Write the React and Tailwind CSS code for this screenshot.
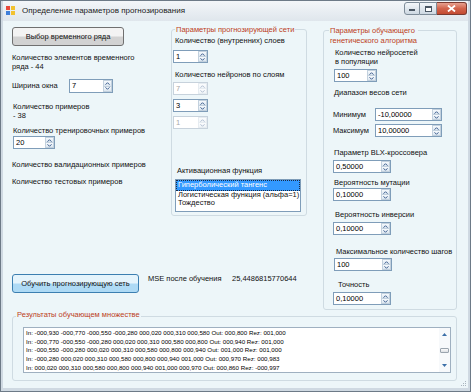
import React from "react";

const FONT = { fontFamily: '"Liberation Sans", Arial, sans-serif' };

function Arrow({ up }) {
  return (
    <svg width="5" height="3" viewBox="0 0 5 3" className="block">
      <path d={up ? "M0.5 2.7 L2.5 0.7 L4.5 2.7" : "M0.5 0.3 L2.5 2.3 L4.5 0.3"} stroke="#3f5f8f" strokeWidth="1" fill="none" />
    </svg>
  );
}

function Spin({ value, disabled, className }) {
  return (
    <div
      className={`flex h-[13px] shrink-0 border bg-white ${
        disabled ? "border-[#c7d2dc] text-[#a8a8a8]" : "border-[#7f9db9] text-black"
      } ${className}`}
    >
      <div className="flex-1 pl-[2px] leading-[11px]">{value}</div>
      <div className={`flex w-[9px] flex-col ${disabled ? "opacity-40" : ""}`}>
        <div className="flex flex-1 items-center justify-center border border-[#c3d1de] bg-linear-to-b from-[#f7fafd] to-[#dbe6f0]">
          <Arrow up />
        </div>
        <div className="flex flex-1 items-center justify-center border border-t-0 border-[#c3d1de] bg-linear-to-b from-[#f7fafd] to-[#dbe6f0]">
          <Arrow />
        </div>
      </div>
    </div>
  );
}

function GroupTitle({ children, className }) {
  return (
    <div className={`w-fit bg-[#edf6f9] px-[1px] text-[#bc3d22] ${className}`}>{children}</div>
  );
}

const lines = [
  "In: -000,930 -000,770 -000,550 -000,280 000,020 000,310 000,580 Out: 000,800 Rez: 001,000",
  "In: -000,770 -000,550 -000,280 000,020 000,310 000,580 000,800 Out: 000,940 Rez: 001,000",
  "In: -000,550 -000,280 000,020 000,310 000,580 000,800 000,940 Out: 001,000 Rez: 001,000",
  "In: -000,280 000,020 000,310 000,580 000,800 000,940 001,000 Out: 000,970 Rez: 000,983",
  "In: 000,020 000,310 000,580 000,800 000,940 001,000 000,970 Out: 000,860 Rez: -000,997",
];

export default function App() {
  return (
    <div
      style={FONT}
      className="flex h-[392px] w-[471px] flex-col overflow-hidden border border-[#6d7a87] bg-[#cfd9e2] px-[2px] pb-[3px] text-[7.5px] leading-[9px] text-[#111]"
    >
      {/* Title bar */}
      <div className="flex h-[20px] shrink-0 items-start bg-linear-to-b from-[#f3f6f9] to-[#dfe6ec]">
        <svg width="9" height="9" viewBox="0 0 9 9" className="ml-[3px] mt-[5px]">
          <rect x="0" y="0" width="4" height="4" fill="#e8483a" />
          <rect x="5" y="0" width="4" height="4" fill="#f2c230" />
          <rect x="0" y="5" width="4" height="4" fill="#3f7fd9" />
          <rect x="5" y="5" width="4" height="4" fill="#f2c230" />
        </svg>
        <div className="ml-[7px] mt-[5px] text-[8px] leading-[10px] text-[#1b1b1b]">
          Определение параметров прогнозирования
        </div>
        <div className="ml-auto mr-[1px] mt-[1px] flex">
          <div className="flex h-[13px] w-[16px] items-end justify-center rounded-l-[3px] border border-[#7e8c99] bg-linear-to-b from-[#f4f7fa] to-[#cdd8e2] pb-[3px]">
            <div className="h-[2px] w-[6px] border border-[#4a5663] bg-white" />
          </div>
          <div className="flex h-[13px] w-[17px] items-center justify-center border border-l-0 border-[#7e8c99] bg-linear-to-b from-[#f4f7fa] to-[#cdd8e2]">
            <div className="h-[6px] w-[7px] border border-[#4a5663] border-t-2 bg-white" />
          </div>
          <div className="flex h-[13px] w-[30px] items-center justify-center rounded-r-[3px] border border-l-0 border-[#7a3a30] bg-linear-to-b from-[#e6a08f] via-[#d2644c] to-[#c34a31]">
            <svg width="9" height="7" viewBox="0 0 9 7">
              <path d="M1 0.5 L8 6.5 M8 0.5 L1 6.5" stroke="#fff" strokeWidth="1.8" />
            </svg>
          </div>
        </div>
      </div>

      {/* Client area */}
      <div className="relative flex flex-1 flex-col bg-[#edf6f9] pl-[9px] pt-[6px]">
        <div className="flex items-start">
          {/* Left + middle */}
          <div className="flex w-[308px] flex-col">
            <div className="flex items-start">
              {/* Left column */}
              <div className="flex w-[156px] flex-col">
                <div className="flex h-[19px] w-[112px] items-center justify-center rounded-[3px] border border-[#707070] bg-linear-to-b from-[#f3f3f3] from-45% to-[#d2d2d2] to-55%">
                  Выбор временного ряда
                </div>
                <div className="mt-[7px]">
                  Количество элементов временного
                  <br />
                  ряда - 44
                </div>
                <div className="mt-[8px] flex items-center">
                  <div className="w-[57px] pb-[1px]">Ширина окна</div>
                  <Spin value="7" className="w-[44px] h-[14px]" />
                </div>
                <div className="ml-[1px] mt-[9px]">
                  Количество примеров
                  <br />- 38
                </div>
                <div className="ml-[1px] mt-[6px]">Количество тренировочных примеров</div>
                <Spin value="20" className="ml-[1px] mt-[1px] w-[42px]" />
                <div className="mt-[11px]">Количество валидационных примеров</div>
                <div className="mt-[8px]">Количество тестовых примеров</div>
              </div>

              {/* Middle group */}
              <div className="ml-[3px] mt-[2px] flex h-[187px] w-[136px] flex-col rounded-[3px] border border-[#cfdbe2]">
                <GroupTitle className="-mt-[5px] ml-[3px]">Параметры прогнозирующей сети</GroupTitle>
                <div className="ml-[3px] mt-[2px]">Количество (внутренних) слоев</div>
                <Spin value="1" className="ml-[1px] mt-[5px] w-[35px]" />
                <div className="ml-[3px] mt-[7px]">Количество нейронов по слоям</div>
                <Spin value="7" disabled className="ml-[1px] mt-[3px] w-[35px]" />
                <Spin value="3" className="ml-[1px] mt-[4px] w-[35px]" />
                <Spin value="1" disabled className="ml-[1px] mt-[4px] w-[35px]" />
                <div className="ml-[5px] mt-[37px]">Активационная функция</div>
                <div className="ml-[3px] mt-[4px] h-[33px] w-[126px] border border-[#7f9db9] bg-white leading-[8.5px]">
                  <div className="border border-dotted border-[#1a2a44] bg-[#3399ff] pl-[1px] text-white">
                    Гиперболический тангенс
                  </div>
                  <div className="pl-[2px]">Логистическая функция (альфа=1)</div>
                  <div className="pl-[2px]">Тождество</div>
                </div>
              </div>
            </div>

            {/* Train button row */}
            <div className="mt-[58px] flex items-start">
              <div className="flex h-[19px] w-[127px] items-center justify-center rounded-[3px] border border-[#3c7fb1] bg-linear-to-b from-[#e5f4fc] from-45% to-[#aedaf5] to-55%">
                Обучить прогнозирующую сеть
              </div>
              <div className="ml-[9px] w-[84px]">MSE после обучения</div>
              <div>25,4486815770644</div>
            </div>
          </div>

          {/* Right group */}
          <div className="ml-[3px] mt-[3px] flex h-[280px] w-[134px] flex-col rounded-[3px] border border-[#cfdbe2]">
            <GroupTitle className="-mt-[5px] ml-[5px] leading-[10px]">
              Параметры обучающего
              <br />
              генетического алгоритма
            </GroupTitle>
            <div className="ml-[11px] mt-[2px]">
              Количество нейросетей
              <br />в популяции
            </div>
            <Spin value="100" className="ml-[10px] mt-[3px] w-[43px]" />
            <div className="ml-[10px] mt-[6px]">Диапазон весов сети</div>
            <div className="ml-[9px] mt-[11px] flex items-center">
              <div className="w-[42px]">Минимум</div>
              <Spin value="-10,00000" className="w-[67px]" />
            </div>
            <div className="ml-[9px] mt-[3px] flex items-center">
              <div className="w-[42px]">Максимум</div>
              <Spin value="10,00000" className="w-[67px]" />
            </div>
            <div className="ml-[10px] mt-[11px]">Параметр BLX-кроссовера</div>
            <Spin value="0,50000" className="ml-[9px] mt-[3px] w-[58px]" />
            <div className="ml-[10px] mt-[5px]">Вероятность мутации</div>
            <Spin value="0,10000" className="ml-[9px] mt-[1px] w-[58px]" />
            <div className="ml-[11px] mt-[9px]">Вероятность инверсии</div>
            <Spin value="0,10000" className="ml-[9px] mt-[3px] w-[58px]" />
            <div className="ml-[12px] mt-[12px]">Максимальное количество шагов</div>
            <Spin value="100" className="ml-[10px] mt-[2px] w-[58px]" />
            <div className="ml-[14px] mt-[9px]">Точность</div>
            <Spin value="0,10000" className="ml-[9px] mt-[3px] w-[58px]" />
          </div>
        </div>

        {/* Bottom group */}
        <div className="mt-[6px] flex h-[65px] w-[445px] flex-col rounded-[3px] border border-[#cfdbe2]">
          <GroupTitle className="-mt-[7px] ml-[3px]">Результаты обучающем множестве</GroupTitle>
          <div className="ml-[10px] mt-[8px] flex h-[46px] w-[428px] border border-[#9fb0c0] bg-white">
            <div className="flex-1 overflow-hidden whitespace-nowrap pl-[2px] pt-[1px] text-[6.2px] leading-[8.7px] text-black">
              {lines.map((l) => (
                <div key={l}>{l}</div>
              ))}
            </div>
            <div className="flex w-[11px] flex-col items-center bg-[#f7f9fb]">
              <svg width="5" height="3" viewBox="0 0 5 3" className="mt-[5px]">
                <path d="M0 3 L2.5 0 L5 3 Z" fill="#3c6fa8" />
              </svg>
              <div className="mt-[12px] h-[5px] w-[9px] rounded-[1px] border border-[#9aa4ae] bg-linear-to-b from-[#fbfbfb] to-[#dcdfe3]" />
              <svg width="5" height="3" viewBox="0 0 5 3" className="mt-auto mb-[5px]">
                <path d="M0 0 L2.5 3 L5 0 Z" fill="#3c6fa8" />
              </svg>
            </div>
          </div>
        </div>

        {/* Size grip */}
        <svg width="7" height="7" viewBox="0 0 7 7" className="absolute bottom-[1px] right-[1px]">
          <rect x="5" y="1" width="1" height="1" fill="#a9b4be" />
          <rect x="3" y="3" width="1" height="1" fill="#a9b4be" />
          <rect x="5" y="3" width="1" height="1" fill="#a9b4be" />
          <rect x="1" y="5" width="1" height="1" fill="#a9b4be" />
          <rect x="3" y="5" width="1" height="1" fill="#a9b4be" />
          <rect x="5" y="5" width="1" height="1" fill="#a9b4be" />
        </svg>
      </div>
    </div>
  );
}
